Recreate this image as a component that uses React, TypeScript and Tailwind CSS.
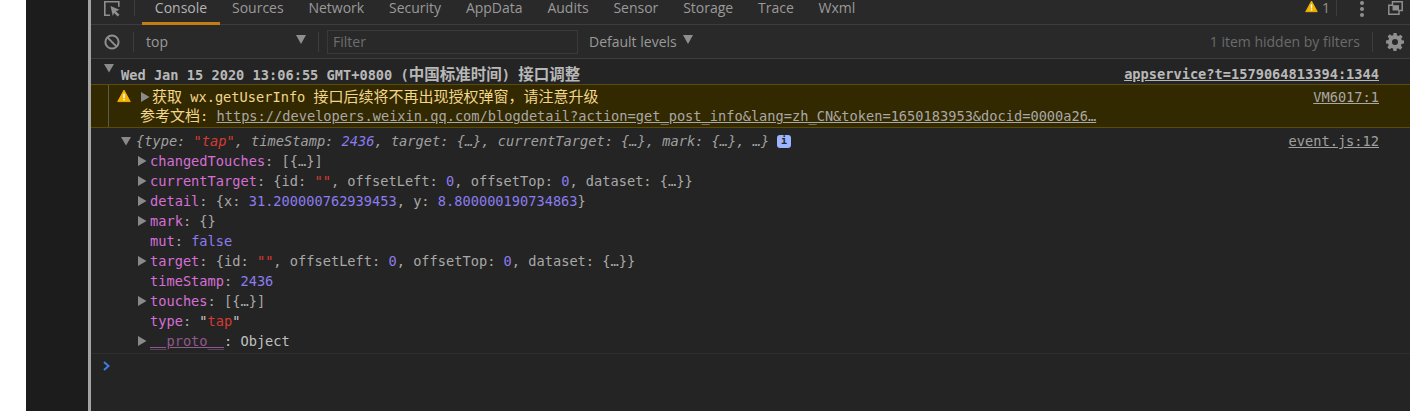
const mono = "font-['DejaVu_Sans_Mono','Noto_Sans_CJK_SC',monospace]";

const tabs = ["Sources", "Network", "Security", "AppData", "Audits", "Sensor", "Storage", "Trace", "Wxml"];

function Tri({ open = false, className = "" }: { open?: boolean; className?: string }) {
  return (
    <svg width="10" height="10" viewBox="0 0 10 10" className={`shrink-0 ${className}`}>
      {open ? <path d="M0 1h10L5 9.500z" fill="#8a8a8a" /> : <path d="M1 0l8.500 5L1 10z" fill="#8a8a8a" />}
    </svg>
  );
}

function Warn({ size = 15 }: { size?: number }) {
  return (
    <svg width={size} height={size} viewBox="0 0 15 15" className="shrink-0">
      <path d="M7.500 1.200 14.200 13.500H.8z" fill="#f4b400" stroke="#f4b400" strokeLinejoin="round" />
      <rect x="6.700" y="5" width="1.600" height="4.800" fill="#fff" />
      <rect x="6.700" y="10.600" width="1.600" height="1.600" fill="#fff" />
    </svg>
  );
}

// CJK glyphs in the console run wider than the latin monospace
const Zh = ({ children }: { children: React.ReactNode }) => <span className="text-[15px]">{children}</span>;
const ZhBold = ({ children }: { children: React.ReactNode }) => <span className="text-[15.500px]">{children}</span>;

function Prop({ name, arrow = true, children }: { name: string; arrow?: boolean; children: React.ReactNode }) {
  return (
    <div className="flex h-5 items-center pl-[46px]">
      <span className="flex w-[13px] items-center">{arrow && <Tri />}</span>
      <span className="text-[#d56fd5]">{name}</span>
      <span className="whitespace-pre text-[#a8a8a8]">: {children}</span>
    </div>
  );
}

const Num = ({ v }: { v: string }) => <span className="text-[#8b7cf0]">{v}</span>;
const Str = ({ v }: { v: string }) => <span className="text-[#d93a32]">{v}</span>;

export default function App() {
  return (
    <div className="flex h-[411px] w-[1410px] overflow-hidden bg-white">
      <div className="w-[26px] shrink-0 bg-white" />
      <div className="w-[62px] shrink-0 bg-[#1c1c1c]" />
      <div className="w-[3px] shrink-0 bg-[#a3a3a3]" />
      <div className="flex min-w-0 flex-1 flex-col bg-[#242424] font-['Open_Sans',sans-serif] text-[#a0a0a0]">
        {/* Tabs */}
        <div className="flex h-[25px] shrink-0 items-start border-b border-[#3d3d3d] bg-[#292929] text-[14px] leading-[16px]">
          <div className="flex h-[16px] w-[51px] shrink-0 items-start pl-[13px]">
            <svg width="16" height="16" viewBox="0 0 16 16" className="mt-px">
              <path d="M6 14.200H.8V.8h14v5" fill="none" stroke="#8f8f8f" strokeWidth="1.600" />
              <path d="M6.500 5l9 3.800-3.600 1.400 3.600 3.600-1.800 1.800-3.600-3.600L8.800 15z" fill="#8f8f8f" />
            </svg>
            <div className="ml-[14px] h-4 w-px bg-[#3d3d3d]" />
          </div>
          <div className="h-[25px] w-[78px] shrink-0 border-b-[3px] border-[#c47d12] text-center text-[#b3b3b3]">
            Console
          </div>
          <div className="flex items-start text-[#9a9a9a]">
            {tabs.map((t) => (
              <span key={t} className="ml-[24.800px] first:ml-[12px]">{t}</span>
            ))}
          </div>
          <div className="ml-auto flex items-start pr-[7px]">
            <Warn size={13} />
            <span className="ml-[4px] text-[#8f8f8f]">1</span>
            <div className="ml-[6px] h-4 w-px bg-[#3d3d3d]" />
            <div className="ml-[23px] flex flex-col gap-[2px] pt-px">
              <div className="h-1 w-1 rounded-full bg-[#8f8f8f]" />
              <div className="h-1 w-1 rounded-full bg-[#8f8f8f]" />
              <div className="h-1 w-1 rounded-full bg-[#8f8f8f]" />
            </div>
            <svg width="15" height="14" viewBox="0 0 15 14" className="ml-[24px] mt-px">
              <path d="M4.500 .8h9.700v8.700H11v3.700H.8V4.200h3.700z" fill="none" stroke="#8f8f8f" strokeWidth="1.500" />
              <path d="M4.500 4.200H11v5.300H4.500z" fill="#8f8f8f" />
            </svg>
          </div>
        </div>
        {/* Toolbar */}
        <div className="flex h-[34px] shrink-0 items-center border-b border-[#3d3d3d] bg-[#292929] text-[14px]">
          <svg width="18" height="18" viewBox="0 0 18 18" className="ml-[12px] shrink-0">
            <circle cx="9" cy="9" r="6.600" fill="none" stroke="#8f8f8f" strokeWidth="2" />
            <path d="M4.400 4.400l9.200 9.200" stroke="#8f8f8f" strokeWidth="2" />
          </svg>
          <div className="ml-[12px] h-5 w-px bg-[#3d3d3d]" />
          <span className="ml-[12px] text-[#9a9a9a]">top</span>
          <svg width="10" height="9" viewBox="0 0 10 9" className="ml-[128px] -mt-1 shrink-0">
            <path d="M0 0h10L5 9z" fill="#8f8f8f" />
          </svg>
          <div className="ml-[12px] h-5 w-px bg-[#3d3d3d]" />
          <div className="ml-[8px] flex h-6 w-[251px] items-center border border-[#3a3a3a] pl-[5px] text-[#6e6e6e]">
            Filter
          </div>
          <span className="ml-[11px] text-[#9a9a9a]">Default levels</span>
          <svg width="10" height="9" viewBox="0 0 10 9" className="ml-[6px] -mt-1 shrink-0">
            <path d="M0 0h10L5 9z" fill="#8f8f8f" />
          </svg>
          <span className="ml-auto text-[#6b6b6b]">1 item hidden by filters</span>
          <div className="ml-[12px] h-5 w-px bg-[#3d3d3d]" />
          <svg width="18" height="18" viewBox="0 0 24 24" className="ml-[13px] mr-[6px] shrink-0">
            <path
              fillRule="evenodd"
              fill="#8f8f8f"
              d="M10 0h4l.7 3.300 1.900.8 2.800-1.900 2.800 2.800-1.900 2.800.8 1.900L24 10v4l-3.300.7-.8 1.900 1.900 2.800-2.800 2.800-2.800-1.900-1.900.8L14 24h-4l-.7-3.300-1.900-.8-2.800 1.900-2.800-2.800 1.900-2.800-.8-1.900L0 14v-4l3.300-.7.8-1.900-1.900-2.800 2.800-2.800 2.800 1.900 1.900-.8zM12 8a4 4 0 1 0 0 8 4 4 0 0 0 0-8z"
            />
          </svg>
        </div>
        {/* Console output */}
        <div className={`${mono} text-[13.67px] leading-5`}>
          <div className="flex h-[26px] items-center border-b border-[#5c4c00] pr-[31px]">
            <Tri open className="-mt-2 ml-[13px]" />
            <span className="ml-[7px] mt-[6px] whitespace-pre font-bold text-[#b8b8b8]">
              Wed Jan 15 2020 13:06:55 GMT+0800 (<ZhBold>中国标准时间</ZhBold>) <ZhBold>接口调整</ZhBold>
            </span>
            <span className="ml-auto mt-[5px] font-bold text-[#b8b8b8] underline">appservice?t=1579064813394:1344</span>
          </div>
          <div className="flex h-[43px] border-b border-[#5c4c00] bg-[#332900] pr-[31px] text-[#f2d68c]">
            <div className="ml-[17px] w-px bg-[#5c5a50]" />
            <div className="ml-[8px] mt-[4px]"><Warn size={14} /></div>
            <div className="ml-[9px] mt-[2px] min-w-0 flex-1">
              <div className="flex h-[19px] items-center">
                <Tri />
                <span className="ml-[2px] whitespace-pre"><Zh>获取</Zh> wx.getUserInfo <Zh>接口后续将不再出现授权弹窗，请注意升级</Zh></span>
                <span className="ml-auto text-[#a8a8a8] underline">VM6017:1</span>
              </div>
              <div className="h-5 whitespace-pre">
                <Zh>参考文档</Zh>: <span className="text-[#a8a8a8] underline">https://developers.weixin.qq.com/blogdetail?action=get_post_info&amp;lang=zh_CN&amp;token=1650183953&amp;docid=0000a26…</span>
              </div>
            </div>
          </div>
          <div className="mt-[3px] flex h-[20px] items-center pr-[31px] text-[#a0a0a0]">
            <Tri open className="ml-[30px]" />
            <span className="ml-[5px] whitespace-pre italic">
              {"{type: "}<Str v={'"tap"'} />{", timeStamp: "}<Num v="2436" />{", target: {…}, currentTarget: {…}, mark: {…}, …}"}
            </span>
            <span className="ml-[8px] flex h-[13px] w-[14px] items-center justify-center rounded-[3px] bg-[#9db4ff] text-[10px] font-bold text-[#242424]">i</span>
            <span className="ml-auto underline">event.js:12</span>
          </div>
          <Prop name="changedTouches">{"[{…}]"}</Prop>
          <Prop name="currentTarget">{"{id: "}<Str v={'""'} />{", offsetLeft: "}<Num v="0" />{", offsetTop: "}<Num v="0" />{", dataset: {…}}"}</Prop>
          <Prop name="detail">{"{x: "}<Num v="31.200000762939453" />{", y: "}<Num v="8.800000190734863" />{"}"}</Prop>
          <Prop name="mark">{"{}"}</Prop>
          <Prop name="mut" arrow={false}><Num v="false" /></Prop>
          <Prop name="target">{"{id: "}<Str v={'""'} />{", offsetLeft: "}<Num v="0" />{", offsetTop: "}<Num v="0" />{", dataset: {…}}"}</Prop>
          <Prop name="timeStamp" arrow={false}><Num v="2436" /></Prop>
          <Prop name="touches">{"[{…}]"}</Prop>
          <Prop name="type" arrow={false}>
            <span className="text-[#c8c8c8]">"</span><Str v="tap" /><span className="text-[#c8c8c8]">"</span>
          </Prop>
          <div className="flex h-5 items-center pl-[46px]">
            <span className="flex w-[13px] items-center"><Tri /></span>
            <span className="text-[#8f5a8f] underline">__proto__</span>
            <span className="whitespace-pre text-[#c0c0c0]">: Object</span>
          </div>
          <div className="mt-[2px] flex h-[24px] items-center border-t border-[#2e2e2e] pl-[11px]">
            <svg width="9" height="10" viewBox="0 0 9 10">
              <path d="M2 1l4.500 4L2 9" fill="none" stroke="#3b7de0" strokeWidth="2" />
            </svg>
          </div>
        </div>
      </div>
    </div>
  );
}
